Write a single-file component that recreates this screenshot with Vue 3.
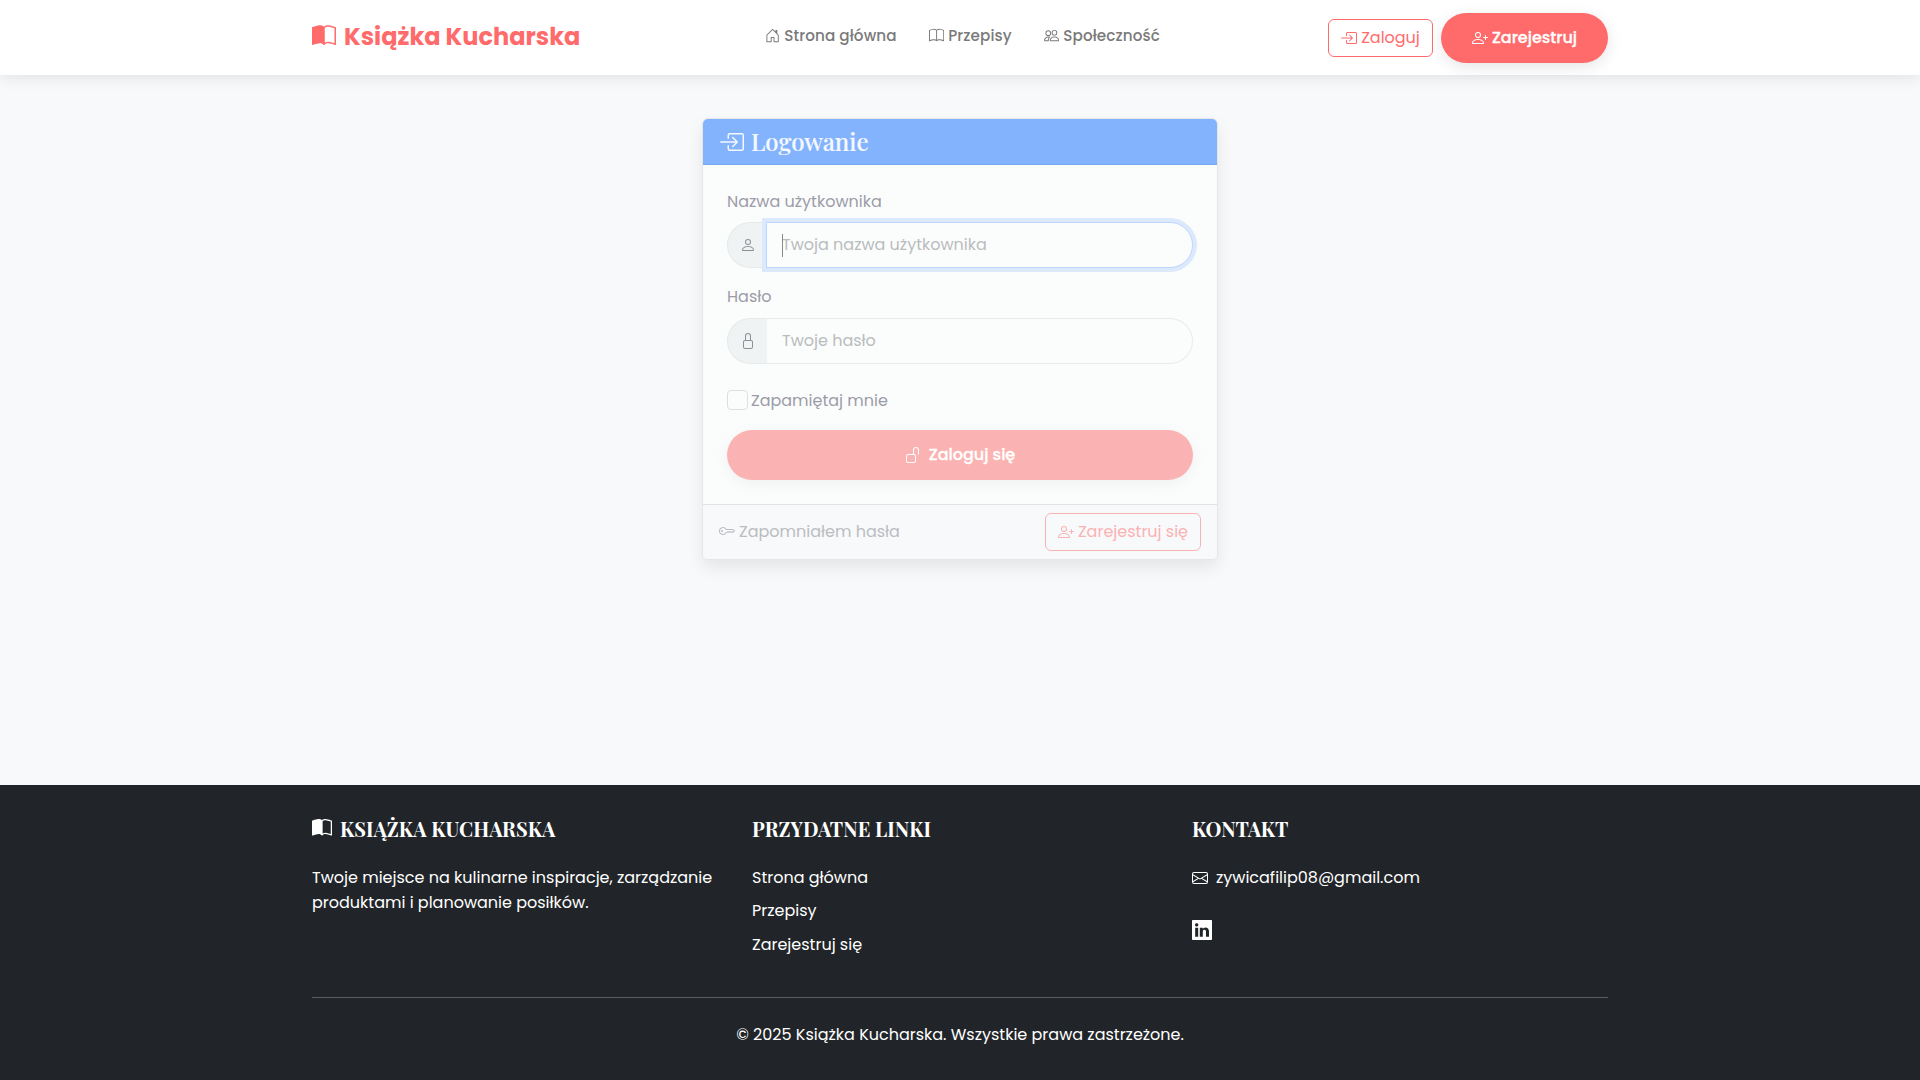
<script setup>
import { h } from 'vue'

const bookRight = 'M8.5 2.687c.654-.689 1.782-.886 3.112-.752 1.234.124 2.503.523 3.388.893v9.923c-.918-.35-2.107-.692-3.287-.81-1.094-.111-2.278-.039-3.213.492z'
const bookCover = 'M8 1.783C7.015.936 5.587.81 4.287.94c-1.514.153-3.042.672-3.994 1.105A.5.5 0 0 0 0 2.5v11a.5.5 0 0 0 .707.455c.882-.4 2.303-.881 3.68-1.02 1.409-.142 2.59.087 3.223.877a.5.5 0 0 0 .78 0c.633-.79 1.814-1.019 3.222-.877 1.378.139 2.8.62 3.681 1.02A.5.5 0 0 0 16 13.5v-11a.5.5 0 0 0-.293-.455c-.952-.433-2.48-.952-3.994-1.105C10.413.809 8.985.936 8 1.783'

const icons = {
  bookHalf: bookRight + bookCover,
  book: 'M1 2.828c.885-.37 2.154-.769 3.388-.893 1.33-.134 2.458.063 3.112.752v9.746c-.935-.53-2.12-.603-3.213-.493-1.18.12-2.37.461-3.287.811z' + bookRight + bookCover,
  house: 'M8.354 1.146a.5.5 0 0 0-.708 0l-6 6A.5.5 0 0 0 1.5 7.5v7a.5.5 0 0 0 .5.5h4.5a.5.5 0 0 0 .5-.5v-4h2v4a.5.5 0 0 0 .5.5H14a.5.5 0 0 0 .5-.5v-7a.5.5 0 0 0-.146-.354L13 5.793V2.5a.5.5 0 0 0-.5-.5h-1a.5.5 0 0 0-.5.5v1.293zM2.5 14V7.707l5.5-5.5 5.5 5.5V14H10v-4a.5.5 0 0 0-.5-.5h-3a.5.5 0 0 0-.5.5v4z',
  people: 'M15 14s1 0 1-1-1-4-5-4-5 3-5 4 1 1 1 1zm-7.978-1L7 12.996c.001-.264.167-1.03.76-1.72C8.312 10.629 9.282 10 11 10c1.717 0 2.687.63 3.24 1.276.593.69.758 1.457.76 1.72l-.008.002-.014.002zM11 7a2 2 0 1 0 0-4 2 2 0 0 0 0 4m3-2a3 3 0 1 1-6 0 3 3 0 0 1 6 0M6.936 9.28a6 6 0 0 0-1.23-.247A7 7 0 0 0 5 9c-4 0-5 3-5 4q0 1 1 1h4.216A2.24 2.24 0 0 1 5 13c0-1.01.377-2.042 1.09-2.904.243-.294.526-.569.846-.816M4.92 10A5.5 5.5 0 0 0 4 13H1c0-.26.164-1.03.76-1.724.545-.636 1.492-1.256 3.16-1.275ZM1.5 5.5a3 3 0 1 1 6 0 3 3 0 0 1-6 0m3-2a2 2 0 1 0 0 4 2 2 0 0 0 0-4',
  login: 'M6 3.5a.5.5 0 0 1 .5-.5h8a.5.5 0 0 1 .5.5v9a.5.5 0 0 1-.5.5h-8a.5.5 0 0 1-.5-.5v-2a.5.5 0 0 0-1 0v2A1.5 1.5 0 0 0 6.5 14h8a1.5 1.5 0 0 0 1.5-1.5v-9A1.5 1.5 0 0 0 14.5 2h-8A1.5 1.5 0 0 0 5 3.5v2a.5.5 0 0 0 1 0zM11.854 8.354a.5.5 0 0 0 0-.708l-3-3a.5.5 0 1 0-.708.708L10.293 7.5H.6a.5.5 0 0 0 0 1h9.693l-2.147 2.146a.5.5 0 0 0 .708.708z',
  person: 'M8 8a3 3 0 1 0 0-6 3 3 0 0 0 0 6m2-3a2 2 0 1 1-4 0 2 2 0 0 1 4 0m4 8c0 1-1 1-1 1H3s-1 0-1-1 1-4 6-4 6 3 6 4m-1-.004c-.001-.246-.154-.986-.832-1.664C11.516 10.68 10.289 10 8 10s-3.516.68-4.168 1.332c-.678.678-.83 1.418-.832 1.664z',
  personPlus: 'M6 8a3 3 0 1 0 0-6 3 3 0 0 0 0 6m2-3a2 2 0 1 1-4 0 2 2 0 0 1 4 0m4 8c0 1-1 1-1 1H1s-1 0-1-1 1-4 6-4 6 3 6 4m-1-.004c-.001-.246-.154-.986-.832-1.664C9.516 10.68 8.289 10 6 10s-3.516.68-4.168 1.332c-.678.678-.83 1.418-.832 1.664zM13.5 5a.5.5 0 0 1 .5.5V7h1.5a.5.5 0 0 1 0 1H14v1.5a.5.5 0 0 1-1 0V8h-1.5a.5.5 0 0 1 0-1H13V5.5a.5.5 0 0 1 .5-.5',
  lock: 'M8 1a2 2 0 0 1 2 2v4H6V3a2 2 0 0 1 2-2m3 6V3a3 3 0 0 0-6 0v4a2 2 0 0 0-2 2v5a2 2 0 0 0 2 2h6a2 2 0 0 0 2-2V9a2 2 0 0 0-2-2M5 8h6a1 1 0 0 1 1 1v5a1 1 0 0 1-1 1H5a1 1 0 0 1-1-1V9a1 1 0 0 1 1-1',
  unlock: 'M11 1a2 2 0 0 0-2 2v4a2 2 0 0 1 2 2v5a2 2 0 0 1-2 2H3a2 2 0 0 1-2-2V9a2 2 0 0 1 2-2h5V3a3 3 0 0 1 6 0v4a.5.5 0 0 1-1 0V3a2 2 0 0 0-2-2M3 8a1 1 0 0 0-1 1v5a1 1 0 0 0 1 1h6a1 1 0 0 0 1-1V9a1 1 0 0 0-1-1z',
  key: 'M0 8a4 4 0 0 1 7.465-2H14a.5.5 0 0 1 .354.146l1.5 1.5a.5.5 0 0 1 0 .708l-1.5 1.5a.5.5 0 0 1-.708 0L13 9.207l-.646.647a.5.5 0 0 1-.708 0L11 9.207l-.646.647a.5.5 0 0 1-.708 0L9 9.207l-.646.647A.5.5 0 0 1 8 10h-.535A4 4 0 0 1 0 8m4-3a3 3 0 1 0 2.712 4.285A.5.5 0 0 1 7.163 9h.63l.853-.854a.5.5 0 0 1 .708 0l.646.647.646-.647a.5.5 0 0 1 .708 0l.646.647.646-.647a.5.5 0 0 1 .708 0l.646.647.793-.793-1-1h-6.63a.5.5 0 0 1-.451-.285A3 3 0 0 0 4 5M4 8a1 1 0 1 1-2 0 1 1 0 0 1 2 0',
  envelope: 'M0 4a2 2 0 0 1 2-2h12a2 2 0 0 1 2 2v8a2 2 0 0 1-2 2H2a2 2 0 0 1-2-2zm2-1a1 1 0 0 0-1 1v.217l7 4.2 7-4.2V4a1 1 0 0 0-1-1zm13 2.383-4.708 2.825L15 11.105zm-.034 6.876-5.64-3.471L8 9.583l-1.326-.795-5.64 3.47A1 1 0 0 0 2 13h12a1 1 0 0 0 .966-.741M1 11.105l4.708-2.897L1 5.383z',
  linkedin: 'M0 .6C0 .2.2 0 .6 0h14.8c.4 0 .6.2.6.6v14.8c0 .4-.2.6-.6.6H.6c-.4 0-.6-.2-.6-.6zm4.943 12.794V6.169H2.542v7.225zm-1.2-8.212c.837 0 1.358-.554 1.358-1.248-.015-.709-.52-1.248-1.342-1.248S2.4 3.226 2.4 3.934c0 .694.521 1.248 1.327 1.248zm4.908 8.212V9.359c0-.216.016-.432.08-.586.173-.431.568-.878 1.232-.878.869 0 1.216.662 1.216 1.634v3.865h2.401V9.25c0-2.22-1.184-3.252-2.764-3.252-1.274 0-1.845.7-2.165 1.193v.025h-.016l.016-.025V6.169h-2.4c.03.678 0 7.225 0 7.225z',
}

const Icon = ({ name, size = 16 }) =>
  h('svg', { width: size, height: size, viewBox: '0 0 16 16', fill: 'currentColor', 'aria-hidden': 'true', style: { flex: 'none' } }, [
    h('path', { d: icons[name] }),
  ])
Icon.props = ['name', 'size']

const nav = [
  { icon: 'house', text: 'Strona główna' },
  { icon: 'book', text: 'Przepisy' },
  { icon: 'people', text: 'Społeczność' },
]
const links = ['Strona główna', 'Przepisy', 'Zarejestruj się']
</script>

<template>
  <div class="page">
    <header class="navbar">
      <div class="container bar">
        <a class="brand"><Icon name="bookHalf" :size="24" /><span>Książka Kucharska</span></a>
        <nav class="menu">
          <a v-for="n in nav" :key="n.text" class="item"><Icon :name="n.icon" :size="15.2" /><span>{{ n.text }}</span></a>
        </nav>
        <div class="actions">
          <a class="outline login"><Icon name="login" /><span>Zaloguj</span></a>
          <a class="pill register"><Icon name="personPlus" /><span>Zarejestruj</span></a>
        </div>
      </div>
    </header>

    <main class="main">
      <section class="card">
        <h1 class="card-head"><Icon name="login" :size="24" /><span>Logowanie</span></h1>
        <form class="card-body">
          <label class="label">Nazwa użytkownika</label>
          <div class="group">
            <span class="prefix"><Icon name="person" /></span>
            <div class="field focus"><i class="caret"></i><span>Twoja nazwa użytkownika</span></div>
          </div>
          <label class="label">Hasło</label>
          <div class="group">
            <span class="prefix"><Icon name="lock" /></span>
            <div class="field"><span>Twoje hasło</span></div>
          </div>
          <label class="remember"><i class="check"></i><span>Zapamiętaj mnie</span></label>
          <div class="pill submit"><Icon name="unlock" /><span>Zaloguj się</span></div>
        </form>
        <div class="card-foot">
          <a class="forgot"><Icon name="key" /><span>Zapomniałem hasła</span></a>
          <a class="outline signup"><Icon name="personPlus" /><span>Zarejestruj się</span></a>
        </div>
      </section>
    </main>

    <footer class="footer">
      <div class="container">
        <div class="cols">
          <div class="col">
            <h2 class="title"><Icon name="bookHalf" :size="20" /><span>KSIĄŻKA KUCHARSKA</span></h2>
            <p class="about">Twoje miejsce na kulinarne inspiracje, zarządzanie produktami i planowanie posiłków.</p>
          </div>
          <div class="col">
            <h2 class="title">PRZYDATNE LINKI</h2>
            <ul class="links">
              <li v-for="l in links" :key="l">{{ l }}</li>
            </ul>
          </div>
          <div class="col">
            <h2 class="title">KONTAKT</h2>
            <p class="mail"><Icon name="envelope" /><span>zywicafilip08@gmail.com</span></p>
            <a class="social"><Icon name="linkedin" :size="20" /></a>
          </div>
        </div>
        <p class="copy">© 2025 Książka Kucharska. Wszystkie prawa zastrzeżone.</p>
      </div>
    </footer>
  </div>
</template>

<style>
body {
  margin: 0;
  background: #f8f9fb;
}
</style>

<style scoped>
.page {
  display: flex;
  flex-direction: column;
  height: 1080px;
  overflow: hidden;
  font-family: Poppins, Inter, "Noto Sans", sans-serif;
  font-size: 16px;
  line-height: 25px;
  background: #f8f9fb;
}
.page * {
  box-sizing: border-box;
}
.page span {
  white-space: nowrap;
}
.container {
  width: 1296px;
  margin: 0 auto;
}

.navbar {
  position: relative;
  height: 75px;
  background: #fff;
  box-shadow: 0 2px 15px rgba(0, 0, 0, 0.1);
}
.bar {
  display: flex;
  align-items: center;
  justify-content: space-between;
  height: 75px;
}
.brand {
  display: flex;
  align-items: center;
  gap: 8px;
  width: 453px;
  color: #ff6b6b;
  font-size: 24px;
  font-weight: 700;
  padding-bottom: 3px;
}
.brand svg {
  margin-top: -1px;
}
.menu {
  display: flex;
  gap: 32.4px;
  flex: 1;
}
.item {
  display: flex;
  align-items: center;
  gap: 4px;
  color: #7a7a7a;
  font-size: 15.2px;
  font-weight: 500;
  letter-spacing: 0.1px;
  padding-bottom: 4px;
}
.actions {
  display: flex;
  align-items: center;
  gap: 8px;
}
.outline {
  display: flex;
  align-items: center;
  justify-content: center;
  gap: 4px;
  height: 38px;
  border: 1px solid #ff6b6b;
  border-radius: 6px;
  color: #ff6b6b;
}
.login {
  width: 105px;
}
.pill {
  display: flex;
  align-items: center;
  justify-content: center;
  gap: 4px;
  height: 50px;
  border-radius: 25px;
  background: #ff6b6b;
  color: #fff;
  font-weight: 500;
  -webkit-text-stroke: 0.3px;
  box-shadow: 0 4px 15px rgba(0, 0, 0, 0.1);
}
.register {
  width: 167px;
}

.main {
  flex: 1;
  display: flex;
  justify-content: center;
  align-items: flex-start;
  padding-top: 43px;
}
.card {
  display: flex;
  flex-direction: column;
  width: 516px;
  height: 442px;
  border: 1px solid #e4e6e7;
  border-radius: 6px;
  background: #fbfdfc;
  box-shadow: 0 8px 16px rgba(0, 0, 0, 0.08);
}
.card-head {
  display: flex;
  align-items: center;
  gap: 7.5px;
  height: 46px;
  margin: 0;
  padding: 0 16.5px;
  border-bottom: 1px solid #76a6ee;
  border-radius: 5px 5px 0 0;
  background: #83b3fc;
  color: #f5f9ff;
  font-family: "Playfair Display", "Liberation Serif", serif;
  font-size: 24px;
  font-weight: 500;
  -webkit-text-stroke: 0.2px;
}
.card-body {
  display: flex;
  flex-direction: column;
  padding: 24px 24px;
  color: #9c9ca8;
}
.label {
  height: 25px;
  margin-bottom: 8px;
}
.group {
  display: flex;
  height: 46px;
  margin-bottom: 16px;
}
.group + .label {
  margin-bottom: 9px;
}
.prefix {
  display: flex;
  align-items: center;
  justify-content: center;
  width: 40px;
  border: 1px solid #e6e9ea;
  border-right: 0;
  border-radius: 23px 0 0 23px;
  background: #f0f3f4;
  color: #8e8f96;
}
.field {
  position: relative;
  display: flex;
  align-items: center;
  flex: 1;
  padding: 0 0 1px 15px;
  border: 1px solid #e8eaec;
  border-left: 0;
  border-radius: 0 23px 23px 0;
  color: #b9bcbe;
}
.focus {
  margin-left: -1px;
  border: 1px solid #bcd7fc;
  background: #fbfdfc;
  box-shadow: 0 0 0 4px #dce9fc;
}
.caret {
  position: absolute;
  left: 15px;
  top: 11px;
  width: 1px;
  height: 23px;
  background: #85898e;
}
.remember {
  display: flex;
  align-items: center;
  gap: 3px;
  height: 25px;
  margin: 8px 0 17px;
}
.check {
  width: 21px;
  height: 20px;
  margin-bottom: 2px;
  border: 1px solid #dcdfe1;
  border-radius: 4px;
}
.submit {
  gap: 8px;
  padding-bottom: 1px;
  background: #fbb2b2;
  box-shadow: 0 4px 15px rgba(0, 0, 0, 0.05);
}
.card-foot {
  display: flex;
  align-items: center;
  justify-content: space-between;
  flex: 1;
  padding: 0 16px;
  border-top: 1px solid #e1e4e4;
  border-radius: 0 0 5px 5px;
  background: #f8f9fb;
}
.forgot {
  display: flex;
  align-items: center;
  gap: 4px;
  padding-bottom: 2px;
  color: #babdc0;
}
.signup {
  width: 156px;
  padding-bottom: 1px;
  border-color: #fbb2b2;
  color: #fbb2b2;
}

.footer {
  height: 295px;
  padding-top: 30px;
  background: #212529;
  color: #fff;
}
.cols {
  display: flex;
  gap: 24px;
  height: 182px;
}
.col {
  width: 416px;
}
.title {
  display: flex;
  align-items: center;
  gap: 8px;
  height: 26px;
  margin: 0 0 24px;
  font-family: "Playfair Display", "Liberation Serif", serif;
  font-size: 20px;
  font-weight: 700;
}
.about,
.mail {
  margin: 0;
}
.links {
  margin: 0;
  padding: 0;
  list-style: none;
}
.links li {
  height: 25px;
  margin-bottom: 8px;
}
.links li:last-child {
  margin-top: 9px;
}
.mail {
  display: flex;
  align-items: center;
  gap: 8px;
}
.social {
  display: block;
  height: 20px;
  margin-top: 30px;
  line-height: 0;
}
.copy {
  margin: 0;
  padding-top: 24px;
  border-top: 1px solid #585b5f;
  text-align: center;
}
</style>
